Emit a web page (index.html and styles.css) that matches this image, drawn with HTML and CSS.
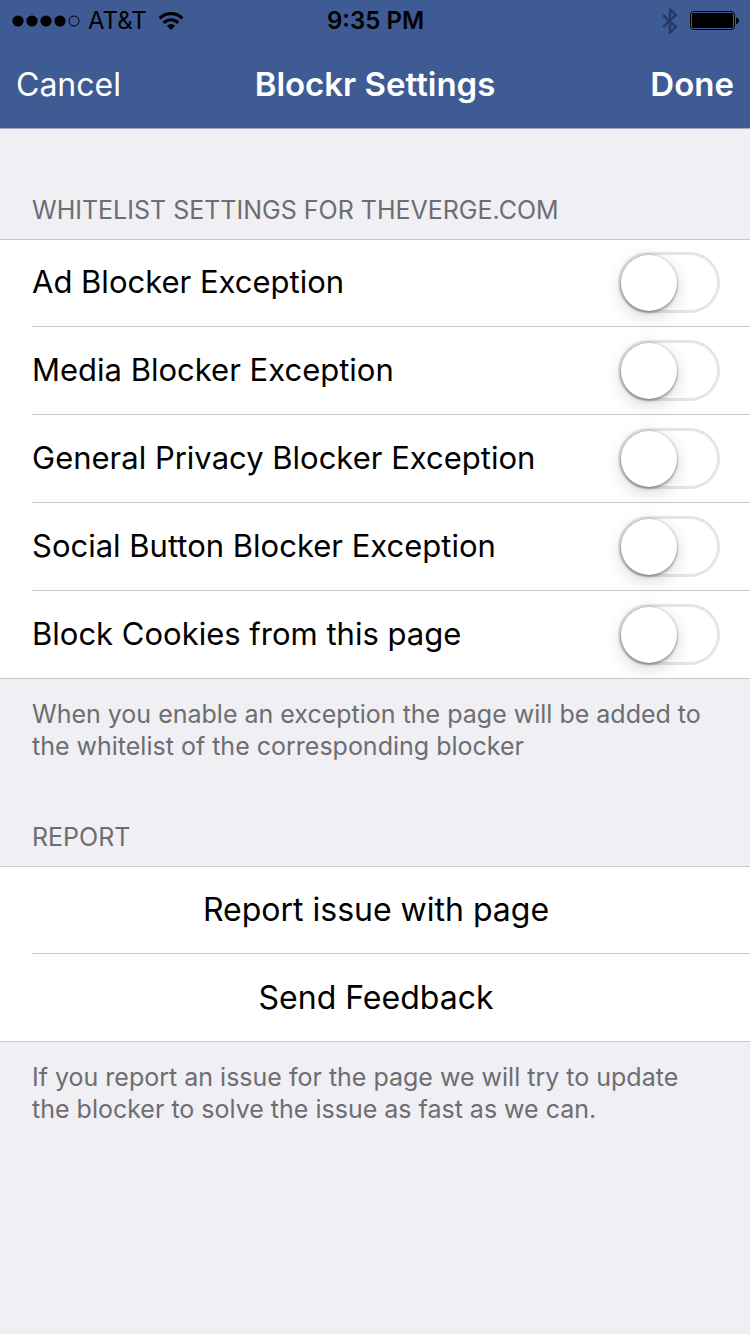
FILE: index.html
```
<!DOCTYPE html>
<html lang="en">
<head>
<meta charset="utf-8">
<meta name="viewport" content="width=device-width, initial-scale=1">
<title>Blockr Settings</title>
<link rel="stylesheet" href="styles.css">
</head>
<body>
<header class="topbar">
  <div class="status">
    <div class="status-left">
      <svg class="signal" width="68" height="12" viewBox="0 0 68 12" aria-hidden="true">
        <circle cx="6" cy="6" r="5.6"/><circle cx="20" cy="6" r="5.6"/><circle cx="34" cy="6" r="5.6"/><circle cx="48" cy="6" r="5.6"/>
        <circle cx="62" cy="6" r="5" fill="none" stroke="#000" stroke-width="1"/>
      </svg>
      <span class="carrier">AT&amp;T</span>
      <svg class="wifi" width="26" height="18" viewBox="0 0 26 18" aria-hidden="true">
        <g fill="none" stroke="#000" stroke-width="3.2">
          <path d="M1.7 6.3a16 16 0 0 1 22.6 0"/>
          <path d="M5.700 10.800a10.300 10.300 0 0 1 14.600 0"/>
        </g>
        <path d="M13 18l-4.200-4.200a6.100 6.100 0 0 1 8.400 0z"/>
      </svg>
    </div>
    <time class="clock">9:35 PM</time>
    <div class="status-right">
      <svg class="bluetooth" width="16" height="26" viewBox="0 0 16 26" aria-hidden="true">
        <path d="M1 7l13 12-6 5.500V1.500L14 7 1 19" fill="none" stroke="#253a68" stroke-width="2.400"/>
      </svg>
      <svg class="battery" width="49" height="20" viewBox="0 0 49 20" aria-hidden="true">
        <rect x=".5" y=".5" width="44" height="18" rx="3.500" fill="none" stroke="#000"/>
        <rect x="2" y="2" width="41" height="15" rx="2"/>
        <path d="M46 6.500c4 .5 4 6 0 6.500z"/>
      </svg>
    </div>
  </div>
  <nav class="nav">
    <button class="nav-button" type="button">Cancel</button>
    <h1 class="title">Blockr Settings</h1>
    <button class="nav-button nav-done" type="button">Done</button>
  </nav>
</header>
<main>
  <section class="group">
    <h2 class="group-title">WHITELIST SETTINGS FOR THEVERGE.COM</h2>
    <div class="list">
      <label class="row"><span class="row-label">Ad Blocker Exception</span><input class="switch" type="checkbox" role="switch"></label>
      <label class="row"><span class="row-label">Media Blocker Exception</span><input class="switch" type="checkbox" role="switch"></label>
      <label class="row"><span class="row-label">General Privacy Blocker Exception</span><input class="switch" type="checkbox" role="switch"></label>
      <label class="row"><span class="row-label">Social Button Blocker Exception</span><input class="switch" type="checkbox" role="switch"></label>
      <label class="row"><span class="row-label">Block Cookies from this page</span><input class="switch" type="checkbox" role="switch"></label>
    </div>
    <p class="note">When you enable an exception the page will be added to the whitelist of the corresponding blocker</p>
  </section>
  <section class="group">
    <h2 class="group-title">REPORT</h2>
    <div class="list">
      <button class="row action" type="button">Report issue with page</button>
      <button class="row action" type="button">Send Feedback</button>
    </div>
    <p class="note">If you report an issue for the page we will try to update the blocker to solve the issue as fast as we can.</p>
  </section>
</main>
</body>
</html>
```

FILE: styles.css
```
* { box-sizing: border-box; }

body {
  margin: 0;
  min-height: 100vh;
  background: #efeff4;
  color: #000;
  font-family: Inter, "Liberation Sans", sans-serif;
}

button {
  border: 0;
  padding: 0;
  background: none;
  color: inherit;
  font: inherit;
}

.topbar {
  background: #3f5b93;
  border-bottom: 1px solid #a3a9bd;
}

.status {
  display: grid;
  grid-template-columns: 1fr auto 1fr;
  align-items: center;
  height: 40px;
  padding: 2px 11px 0 12px;
  font-size: 24px;
  line-height: 38px;
}

.status-left,
.status-right {
  display: flex;
  align-items: center;
}

.status-left { gap: 8px; }
.status-right { gap: 12px; justify-content: flex-end; }
.wifi { margin-left: 3px; }
.clock { font-weight: 600; }

.nav {
  display: grid;
  grid-template-columns: 1fr auto 1fr;
  align-items: center;
  height: 88px;
  padding: 0 16px;
  color: #fff;
  font-size: 33px;
}

.nav-button {
  justify-self: start;
  font-size: 32px;
  font-weight: 400;
}

.nav-done {
  justify-self: end;
  font-size: 33px;
  font-weight: 600;
}

.title {
  margin: 0;
  font-size: 33px;
  font-weight: 600;
}

.group { padding-top: 58px; }
.group:first-child { padding-top: 65px; }

.group-title {
  margin: 0;
  padding: 0 32px 13px;
  color: #6d6d72;
  font-size: 25px;
  font-weight: 400;
  line-height: 32px;
}

.list {
  background: #fff;
  box-shadow: inset 0 1px #c8c7cc;
  border-bottom: 1px solid #c8c7cc;
}

.row {
  display: flex;
  align-items: center;
  justify-content: space-between;
  height: 88px;
  margin-left: 32px;
  padding-right: 30px;
  border-bottom: 1px solid #c8c7cc;
  font-size: 31px;
}

.row:last-child {
  height: 87px;
  border-bottom: 0;
}

.row-label { padding-bottom: 2px; }

.action {
  width: calc(100% - 32px);
  justify-content: center;
  font-size: 32px;
}

.switch {
  appearance: none;
  display: flex;
  align-items: center;
  width: 102px;
  height: 61px;
  margin: 0;
  padding: 0;
  border: 3px solid #e5e5e5;
  border-radius: 31px;
  background: #fff;
}

.switch::before {
  content: "";
  width: 56px;
  height: 56px;
  border-radius: 50%;
  background: #fff;
  box-shadow: 0 0 2px 1px rgba(0, 0, 0, .12), 0 2px 3px rgba(0, 0, 0, .3), 0 5px 16px 2px rgba(0, 0, 0, .13);
}

.switch:checked {
  justify-content: flex-end;
  border-color: #4cd964;
  background: #4cd964;
}

.note {
  margin: 0;
  padding: 19px 32px 1px;
  color: #6d6d72;
  font-size: 25px;
  line-height: 32px;
}
```
